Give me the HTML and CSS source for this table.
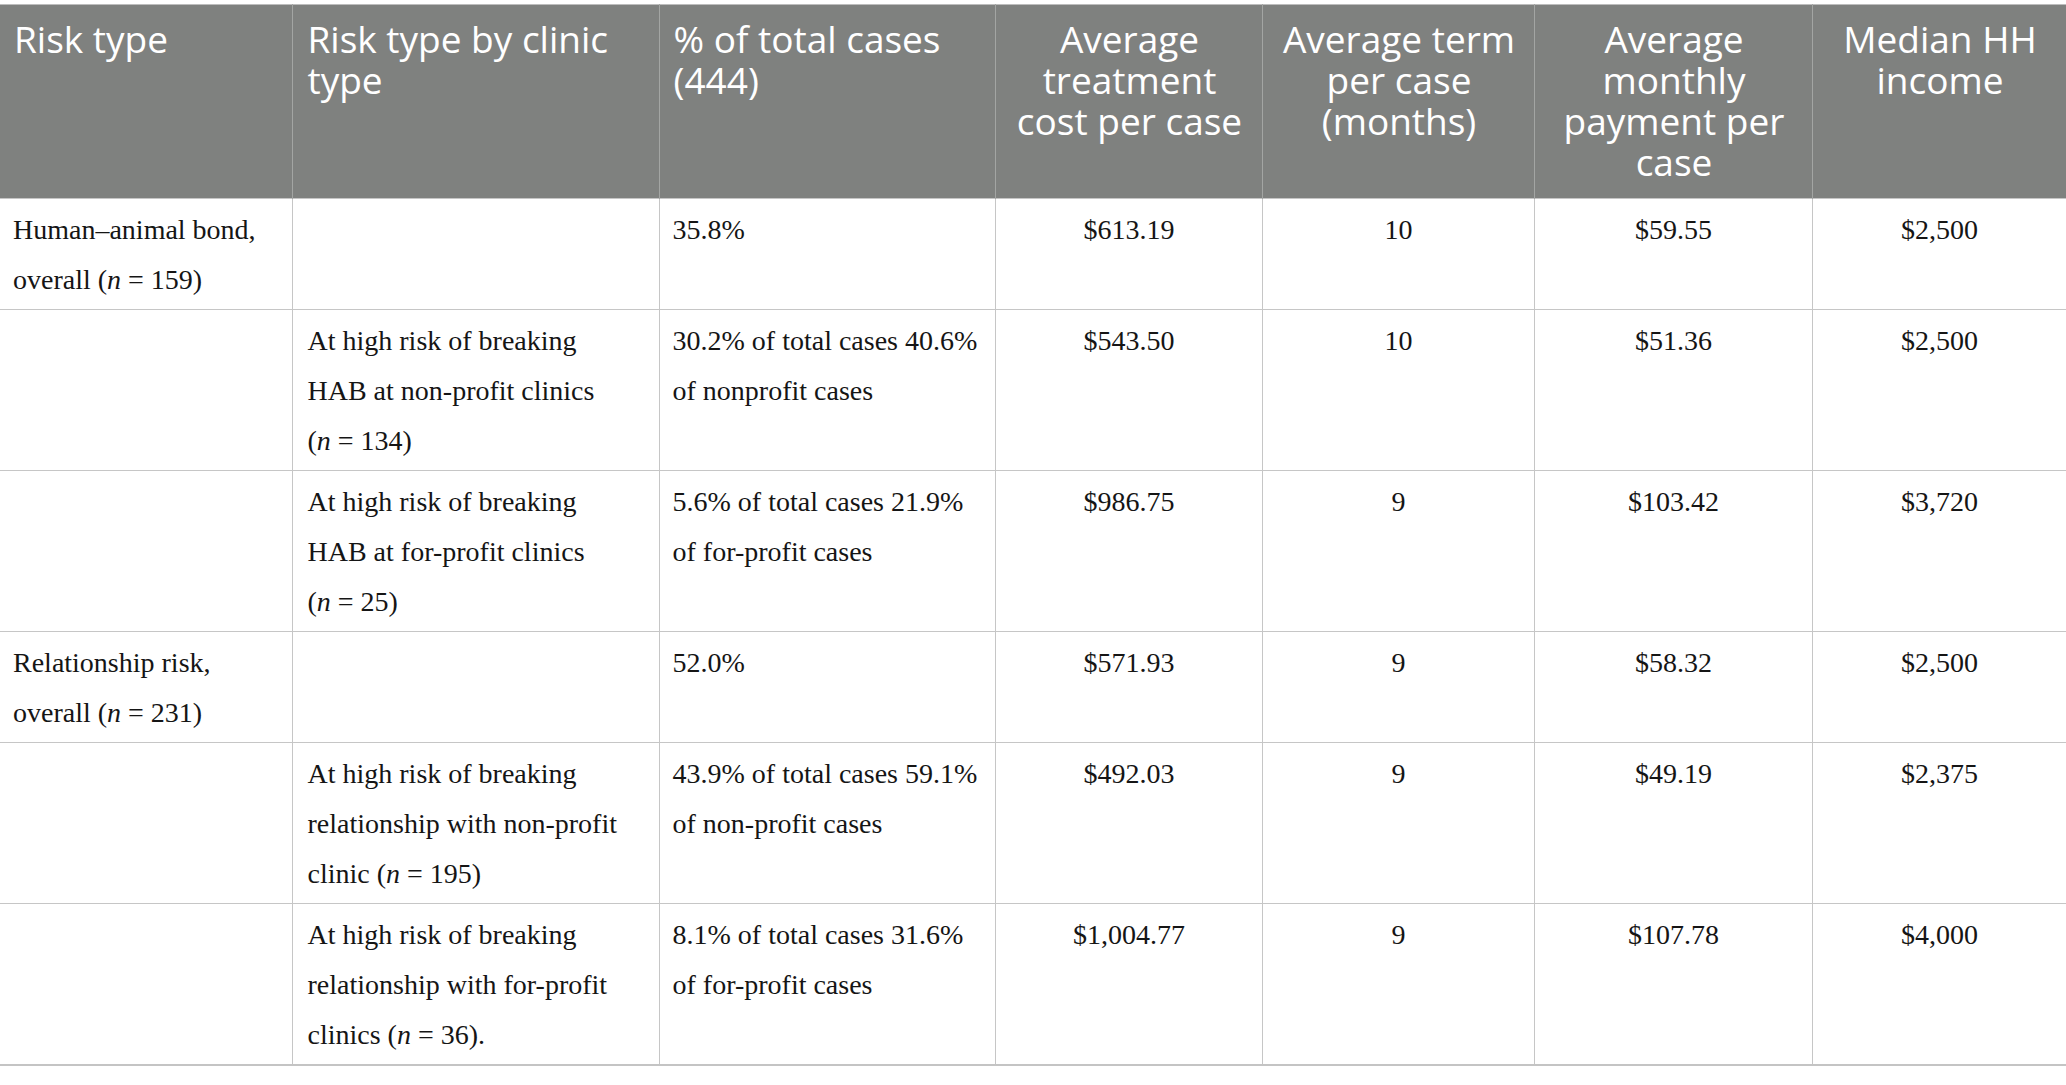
FILE: index.html
```html
<!DOCTYPE html>
<html lang="en">
<head>
<meta charset="utf-8">
<title>Risk type table</title>
<link rel="stylesheet" href="styles.css">
</head>
<body>
<div class="page">
<table class="risk-table">
  <colgroup>
    <col class="w1"><col class="w2"><col class="w3"><col class="w4"><col class="w5"><col class="w6"><col class="w7">
  </colgroup>
  <thead>
    <tr>
      <th class="left c1">Risk type</th>
      <th class="left c2">Risk type by clinic type</th>
      <th class="left c3">% of total cases (444)</th>
      <th class="center">Average treatment cost per case</th>
      <th class="center">Average term per case (months)</th>
      <th class="center">Average monthly payment per case</th>
      <th class="center">Median HH income</th>
    </tr>
  </thead>
  <tbody>
    <tr>
      <td class="c1">Human–animal bond, overall (<i>n</i>&nbsp;=&nbsp;159)</td>
      <td class="c2"></td>
      <td class="c3">35.8%</td>
      <td class="center">$613.19</td>
      <td class="center">10</td>
      <td class="center">$59.55</td>
      <td class="center">$2,500</td>
    </tr>
    <tr>
      <td class="c1"></td>
      <td class="c2">At high risk of breaking HAB at non-profit clinics (<i>n</i>&nbsp;=&nbsp;134)</td>
      <td class="c3">30.2% of total cases 40.6% of nonprofit cases</td>
      <td class="center">$543.50</td>
      <td class="center">10</td>
      <td class="center">$51.36</td>
      <td class="center">$2,500</td>
    </tr>
    <tr>
      <td class="c1"></td>
      <td class="c2">At high risk of breaking HAB at for-profit clinics (<i>n</i>&nbsp;=&nbsp;25)</td>
      <td class="c3">5.6% of total cases 21.9% of for-profit cases</td>
      <td class="center">$986.75</td>
      <td class="center">9</td>
      <td class="center">$103.42</td>
      <td class="center">$3,720</td>
    </tr>
    <tr>
      <td class="c1">Relationship risk, overall (<i>n</i>&nbsp;=&nbsp;231)</td>
      <td class="c2"></td>
      <td class="c3">52.0%</td>
      <td class="center">$571.93</td>
      <td class="center">9</td>
      <td class="center">$58.32</td>
      <td class="center">$2,500</td>
    </tr>
    <tr>
      <td class="c1"></td>
      <td class="c2">At high risk of breaking relationship with non-profit clinic (<i>n</i>&nbsp;=&nbsp;195)</td>
      <td class="c3">43.9% of total cases 59.1% of non-profit cases</td>
      <td class="center">$492.03</td>
      <td class="center">9</td>
      <td class="center">$49.19</td>
      <td class="center">$2,375</td>
    </tr>
    <tr>
      <td class="c1"></td>
      <td class="c2">At high risk of breaking relationship with for-profit clinics (<i>n</i>&nbsp;=&nbsp;36).</td>
      <td class="c3">8.1% of total cases 31.6% of for-profit cases</td>
      <td class="center">$1,004.77</td>
      <td class="center">9</td>
      <td class="center">$107.78</td>
      <td class="center">$4,000</td>
    </tr>
  </tbody>
</table>
</div>
</body>
</html>
```

FILE: styles.css
```css
html, body {
  margin: 0;
  padding: 0;
  background: #ffffff;
}

.page {
  padding-top: 4px;
  width: 2066px;
  overflow: hidden;
}

.risk-table {
  width: 2066px;
  table-layout: fixed;
  border-collapse: collapse;
  border-top: 1px solid #bdbdbd;
  border-bottom: 2px solid #c4c4c4;
}

.w1 { width: 292px; }
.w2 { width: 367px; }
.w3 { width: 336px; }
.w4 { width: 267px; }
.w5 { width: 272px; }
.w6 { width: 278px; }
.w7 { width: 254px; }

.risk-table th {
  background: #7f817f;
  color: #ffffff;
  font-family: "Open Sans", "Noto Sans", sans-serif;
  font-weight: 400;
  font-size: 37px;
  line-height: 41px;
  vertical-align: top;
  padding: 13px 12px 16px 14px;
  border-left: 1px solid #a3a5a3;
  border-right: 1px solid #a3a5a3;
  height: 164px;
}

.risk-table td {
  font-family: "Liberation Serif", "Times New Roman", serif;
  font-size: 28px;
  line-height: 50px;
  color: #151515;
  vertical-align: top;
  padding: 6px 12px 4px 13px;
  border: 1px solid #c6c6c6;
}

.risk-table tr > :first-child {
  border-left: none;
}

.risk-table .left { text-align: left; }
.risk-table .center { text-align: center; }

.risk-table td.c2,
.risk-table th.c2 {
  padding-left: 15px;
  padding-right: 24px;
}

.risk-table td.c3 {
  padding-left: 13px;
  padding-right: 8px;
}

.risk-table i {
  font-style: italic;
}
```
